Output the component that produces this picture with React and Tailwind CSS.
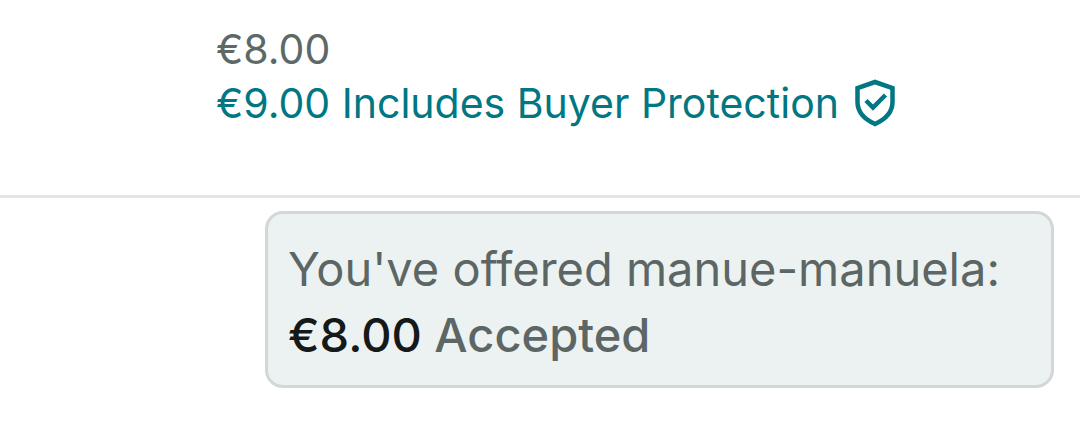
function ShieldIcon() {
  return (
    <svg viewBox="0 0 42 48" fill="none" stroke="currentColor" strokeWidth="4.5" className="h-12 w-[42px]" aria-hidden="true">
      <path d="M20 3 L2.5 9 V23 C2.5 33 9 40 20 45 C31 40 37.5 33 37.5 23 V9 Z" />
      <path d="M11 21.5 L18 28.5 L30.5 16" />
    </svg>
  )
}

function PriceSummary() {
  return (
    <section className="border-b-[3px] border-[#e3e4e4] pt-[22px] pb-[65px] pl-[216px]">
      <p className="text-[41px] leading-[54px] text-[#5c6967]">€8.00</p>
      <p className="flex items-center gap-4 text-[41px] leading-[54px] text-[#007782]">
        <span>€9.00 Includes Buyer Protection</span>
        <ShieldIcon />
      </p>
    </section>
  )
}

function OfferMessage() {
  return (
    <section className="pt-[13px] pr-[26px] pl-[265px]">
      <div className="rounded-[18px] border-[3px] border-[#d2d8d8] bg-[#ecf2f2] px-5 pt-[22px] pb-[17px]">
        <p className="text-[47px] leading-[66px] text-[#5c6664]">You've offered manue-manuela:</p>
        <p className="text-[47px] leading-[66px] font-medium text-[#5c6664]">
          <span className="text-[#15191a]">€8.00</span> Accepted
        </p>
      </div>
    </section>
  )
}

export default function App() {
  return (
    <main className="min-h-screen bg-white font-['Inter',sans-serif]">
      <PriceSummary />
      <OfferMessage />
    </main>
  )
}
